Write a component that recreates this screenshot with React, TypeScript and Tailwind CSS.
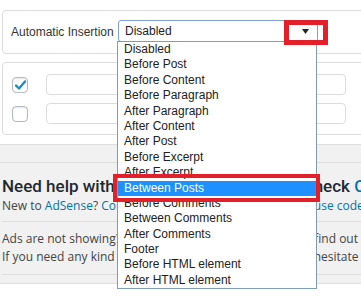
import React from "react";

const options = [
  "Disabled",
  "Before Post",
  "Before Content",
  "Before Paragraph",
  "After Paragraph",
  "After Content",
  "After Post",
  "Before Excerpt",
  "After Excerpt",
  "Between Posts",
  "Before Comments",
  "Between Comments",
  "After Comments",
  "Footer",
  "Before HTML element",
  "After HTML element",
];

const Checkbox = ({ checked }: { checked?: boolean }) => (
  <div className="w-[16px] h-[16px] shrink-0 rounded-[4px] border border-[#b4b9be] bg-white shadow-[inset_0_1px_2px_rgba(0,0,0,0.1)] flex items-center justify-center">
    {checked && (
      <svg width="13" height="12" viewBox="0 0 13 12">
        <path d="M2 6.5 L5 9.5 L11 2.5" fill="none" stroke="#1e8cbe" strokeWidth="2.4" strokeLinecap="round" strokeLinejoin="round" />
      </svg>
    )}
  </div>
);

const App = () => {
  return (
    <div className="relative w-[361px] h-[303px] overflow-hidden bg-white font-['Liberation_Sans',Arial,sans-serif] text-[#333]">
      {/* insertion panel */}
      <div className="pt-[10px] pl-[2px]">
        <div className="w-[420px] h-[44px] border border-[#dcdcdc] rounded-[4px] flex items-center pl-[8px]">
          <span className="text-[12px] w-[107px]">Automatic Insertion</span>
          <div className="w-[200px] h-[22px] mt-[-2px] border border-[#7f9fd0] rounded-[3px] bg-white flex items-center justify-between pl-[6px] pr-[8px] text-[12px] text-[#222]">
            <span>Disabled</span>
            <svg width="7" height="5" viewBox="0 0 7 5">
              <path d="M0 0 H7 L3.5 5 Z" fill="#222" />
            </svg>
          </div>
        </div>

        {/* checkbox panel */}
        <div className="mt-[8px] w-[420px] h-[73px] border border-[#dcdcdc] rounded-[4px] flex flex-col gap-[8px] pt-[11px] pl-[9px]">
          <div className="flex items-center gap-[18px]">
            <Checkbox checked />
            <div className="w-[300px] h-[21px] border border-[#dcdcdc] rounded-[4px]" />
          </div>
          <div className="flex items-center gap-[18px]">
            <Checkbox />
            <div className="w-[300px] h-[21px] border border-[#dcdcdc] rounded-[4px]" />
          </div>
        </div>
      </div>

      {/* help section */}
      <div className="mt-[9px] h-[140px] bg-[#f1f1f1] border-y border-[#dedede] font-['Open_Sans',sans-serif] text-[#444]">
        <div className="mt-[17px] border-t border-[#dedede] pl-[2px] whitespace-nowrap">
          <div className="pt-[11px] h-[35px] leading-[24px] text-[17px] font-medium text-[#23282d] font-['Roboto',sans-serif]">
            Need help with setting up all ad codes? <span>Check</span> <span className="text-[#0073aa]">Code generator</span>
          </div>
          <div className="h-[24px] leading-[16px] text-[12px] border-b border-[#dedede]">
            New to <span className="text-[#0073aa]">AdSense</span>?{" "}
            <span className="text-[#0073aa]">Connect to AdSense and get ad tag to use code</span> generator
          </div>
          <div className="pt-[8px] pb-[9px] leading-[17.5px] text-[12px] border-b border-[#dedede]">
            <div>Ads are not showing? Check troubleshooting chapter to find out why</div>
            <div>If you need any kind of help and support, please do not hesitate to contact me</div>
          </div>
        </div>
      </div>

      {/* open dropdown list */}
      <div className="absolute left-[117px] top-[41px] w-[200px] border border-[#7f9db9] bg-white text-[12px] text-[#222]">
        {options.map((o) => (
          <div
            key={o}
            className={
              o === "Between Posts"
                ? "h-[15.4px] leading-[15.4px] pl-[6px] bg-[#1e90ff] text-white"
                : "h-[15.4px] leading-[15.4px] pl-[6px]"
            }
          >
            {o}
          </div>
        ))}
      </div>

      {/* highlight boxes */}
      <div className="absolute left-[284px] top-[20px] w-[44px] h-[25px] border-[5px] border-[#e3202a]" />
      <div className="absolute left-[113px] top-[174px] w-[207px] h-[28px] border-[4px] border-[#e3202a]" />
    </div>
  );
};

export default App;
